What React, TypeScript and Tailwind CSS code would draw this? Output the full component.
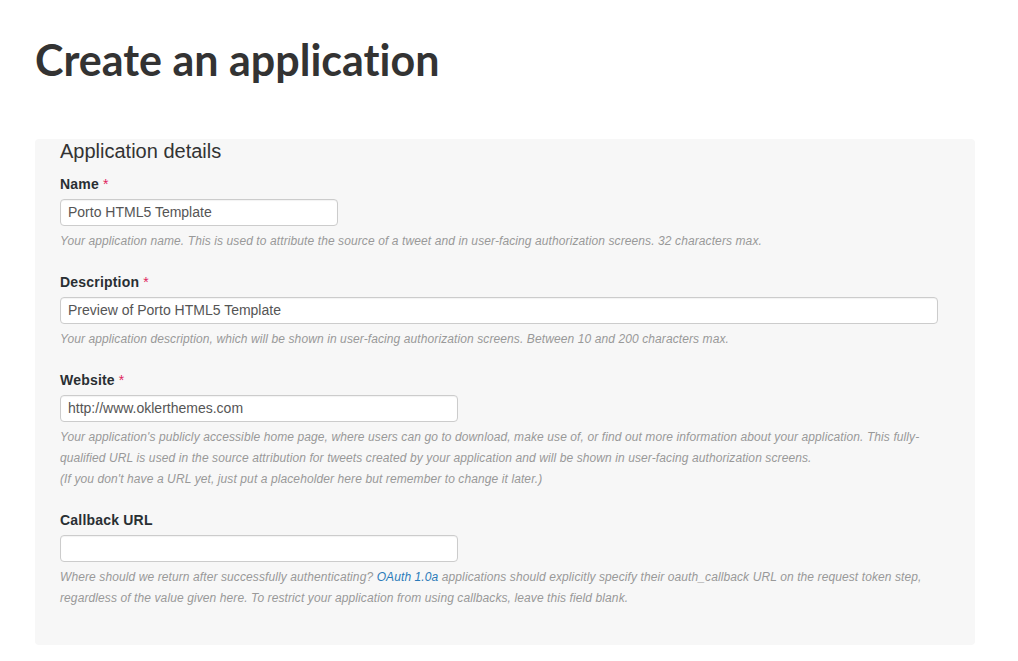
import React from "react";

const Label = ({ text, required }: { text: string; required?: boolean }) => (
  <div className="h-[20px] leading-[20px] text-[14px] font-bold text-[#292f33] mb-[5px] tracking-[0.2px]">
    {text}
    {required && <span className="text-[#e0245e] font-normal ml-[4px]">*</span>}
  </div>
);

const Input = ({ value, width }: { value: string; width: string }) => (
  <div
    className={`${width} h-[27px] bg-white border border-[#cccccc] rounded-[4px] px-[7px] flex items-center text-[14px] text-[#555555] shadow-[inset_0_1px_1px_rgba(0,0,0,0.05)]`}
  >
    {value}
  </div>
);

const Help = ({ children }: { children: React.ReactNode }) => (
  <p className="mt-[5px] text-[12px] leading-[21px] italic text-[#999999] whitespace-nowrap tracking-[0.1px]">{children}</p>
);

export default function App() {
  return (
    <div
      className="w-[1018px] h-[661px] bg-white overflow-hidden px-[35px] pt-[30px]"
      style={{ fontFamily: '"Liberation Sans", Arial, sans-serif' }}
    >
      <h1
        className="text-[43px] leading-[60px] font-bold text-[#333333] [font-variant-ligatures:none]"
        style={{ fontFamily: 'Lato, "Open Sans", sans-serif' }}
      >
        Create an application
      </h1>
      <div className="mt-[49px] w-[940px] bg-[#f7f7f7] rounded-[4px] pl-[25px] pb-[36px]">
        <h2 className="text-[20px] leading-[24px] text-[#333333] mb-[11px]">Application details</h2>

        <div className="mb-[20px]">
          <Label text="Name" required />
          <Input value="Porto HTML5 Template" width="w-[278px]" />
          <Help>
            Your application name. This is used to attribute the source of a tweet and in user-facing authorization screens. 32 characters max.
          </Help>
        </div>

        <div className="mb-[20px]">
          <Label text="Description" required />
          <Input value="Preview of Porto HTML5 Template" width="w-[878px]" />
          <Help>
            Your application description, which will be shown in user-facing authorization screens. Between 10 and 200 characters max.
          </Help>
        </div>

        <div className="mb-[20px]">
          <Label text="Website" required />
          <Input value="http://www.oklerthemes.com" width="w-[398px]" />
          <Help>
            Your application's publicly accessible home page, where users can go to download, make use of, or find out more information about your application. This fully-
            <br />
            qualified URL is used in the source attribution for tweets created by your application and will be shown in user-facing authorization screens.
            <br />
            (If you don't have a URL yet, just put a placeholder here but remember to change it later.)
          </Help>
        </div>

        <div>
          <Label text="Callback URL" />
          <Input value="" width="w-[398px]" />
          <Help>
            Where should we return after successfully authenticating?{" "}
            <a className="text-[#2b7bb9]" href="#">
              OAuth 1.0a
            </a>{" "}
            applications should explicitly specify their oauth_callback URL on the request token step,
            <br />
            regardless of the value given here. To restrict your application from using callbacks, leave this field blank.
          </Help>
        </div>
      </div>
    </div>
  );
}
